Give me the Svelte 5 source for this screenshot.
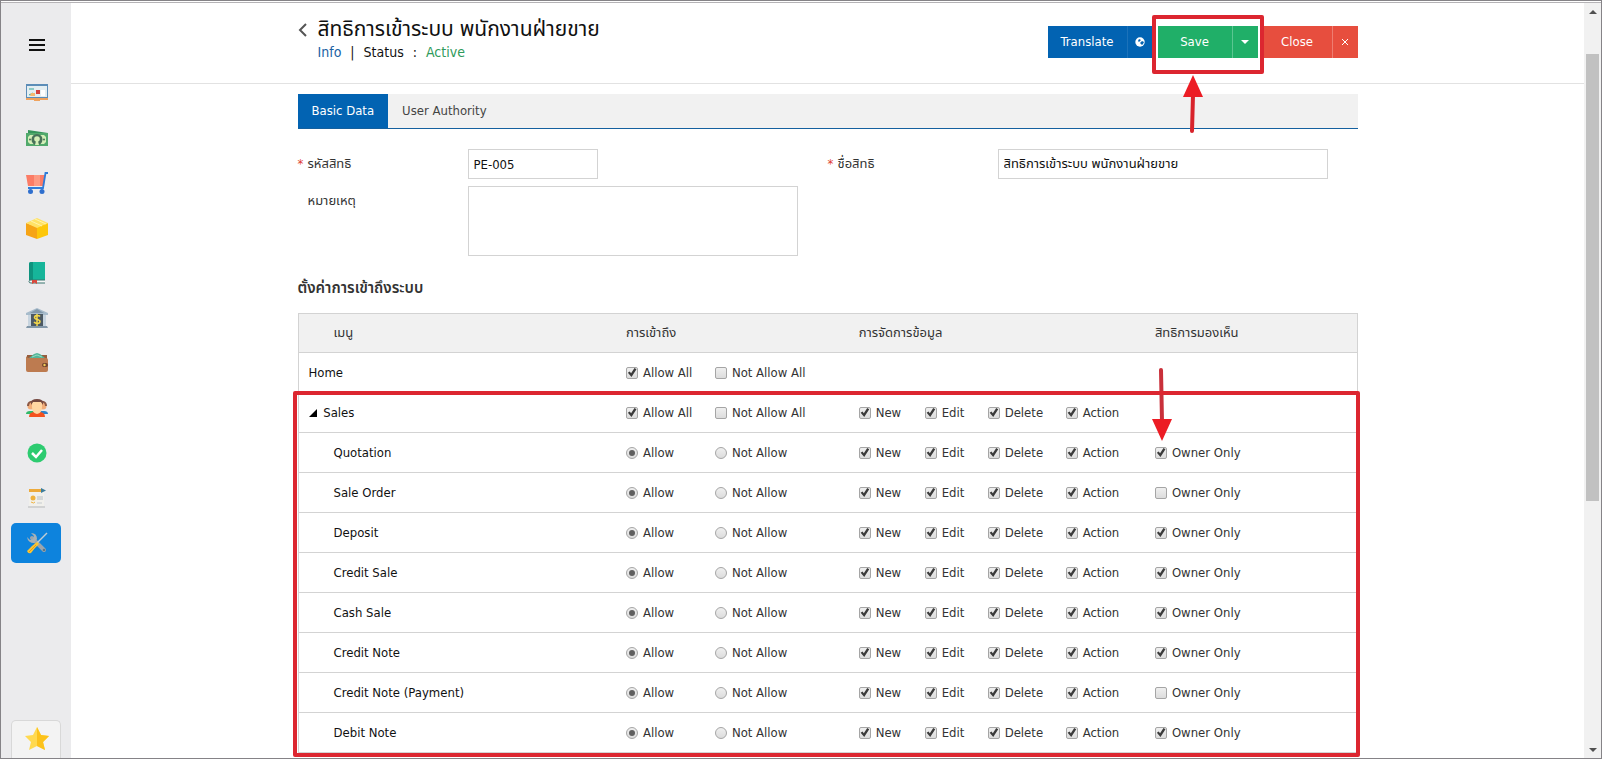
<script>
  let code = $state('PE-005');
  let name = $state('สิทธิการเข้าระบบ พนักงานฝ่ายขาย');
  let note = $state('');
  let tab = $state('Basic Data');

  const tabs = ['Basic Data', 'User Authority'];
  const actions = ['New', 'Edit', 'Delete', 'Action'];
  const menu = [
    'Dashboard', 'Finance', 'Purchase', 'Inventory', 'Accounting',
    'Bank', 'Wallet', 'Contacts', 'Approve', 'Reports', 'Settings'
  ];

  const rows = [
    { label: 'Home', level: 'root' },
    { label: 'Sales', level: 'group' },
    { label: 'Quotation', owner: true },
    { label: 'Sale Order', owner: false },
    { label: 'Deposit', owner: true },
    { label: 'Credit Sale', owner: true },
    { label: 'Cash Sale', owner: true },
    { label: 'Credit Note', owner: true },
    { label: 'Credit Note (Payment)', owner: false },
    { label: 'Debit Note', owner: true }
  ];
</script>

{#snippet icon(kind)}
  <svg width="22" height="22" viewBox="0 0 22 22" aria-hidden="true">
    {#if kind === 'Dashboard'}
      <rect x="0" y="2" width="22" height="15" fill="#5c8db8" />
      <rect x="1" y="4" width="20" height="11" fill="#e4eef2" />
      <path d="M3 7h5M3 13l4-2" stroke="#35a79c" />
      <path d="M5 11h4v3H4z" fill="#f5b96f" />
      <rect x="10" y="8" width="4" height="4" fill="#d3423e" />
      <path d="M15 8h4v6h-4z" fill="#fff" />
      <path d="M0 16h22v2h-8v1H8v-1H0z" fill="#efa35f" />
    {:else if kind === 'Finance'}
      <path d="M2 3l20 3v3H2z" fill="#35955a" />
      <rect x="0" y="6" width="22" height="13" fill="#51a96c" />
      <path d="M4 8h14l2 2v5l-2 2H4l-2-2v-5z" fill="#d4efb8" />
      <circle cx="11" cy="12.500" r="5.500" fill="#48725a" />
      <circle cx="11" cy="12" r="2.800" fill="#d4efb8" />
      <path d="M9 18l1-4h2l1 4z" fill="#d4efb8" />
      <circle cx="4" cy="12.500" r="1" fill="#48725a" />
      <circle cx="18" cy="12.500" r="1" fill="#48725a" />
    {:else if kind === 'Purchase'}
      <path d="M0 3h19l-1 11H2z" fill="#fb7c66" />
      <path d="M8 3h6v11H8z" fill="#fd9a83" />
      <path d="M22 1h-2.500L17 16H2" fill="none" stroke="#2f7bd8" stroke-width="1.800" />
      <circle cx="4.500" cy="19.500" r="2.500" fill="#2f6fce" />
      <circle cx="16" cy="19.500" r="2.500" fill="#2f6fce" />
    {:else if kind === 'Inventory'}
      <path d="M0 6l11 4v12L0 18z" fill="#f6a416" />
      <path d="M22 6l-11 4v12l11-4z" fill="#fdc70a" />
      <path d="M0 6l11-5 11 5-11 5z" fill="#ffe266" />
      <path d="M5 4l11 5M9 2l11 5" stroke="#fff3a8" />
    {:else if kind === 'Accounting'}
      <path d="M5 0h14v18H3V2q0-2 2-2z" fill="#16b59a" />
      <path d="M3 2q0-2 2-2h2v18H3z" fill="#0e937e" />
      <path d="M19 18H5q-2 0-2 1.500T5 21h14" fill="#f6f6f6" stroke="#39756f" />
      <path d="M6 18h5v4l-2.500-1.500L6 22z" fill="#d8483c" />
    {:else if kind === 'Bank'}
      <path d="M11 1l11 5v2H0V6z" fill="#a7bbcb" />
      <path d="M11 2l7 4H4z" fill="#8298aa" />
      <path d="M2 8h3v11H2zM17 8h3v11h-3z" fill="#c7d4df" />
      <rect x="5" y="7" width="12" height="12" fill="#4c5964" />
      <path d="M14 9.500c-1-1.500-5.500-1.500-5.500 1s5.500 1.500 5.500 4-4.500 2.500-6 .5M11 7v12" fill="none" stroke="#f4d84a" stroke-width="1.500" />
      <path d="M1 19h20l1 2H0z" fill="#8297a9" />
    {:else if kind === 'Wallet'}
      <path d="M1 3h20v4H1z" fill="#965d3d" />
      <path d="M3 6l5-4 3-1 3 1 5 4z" fill="#52b69a" />
      <path d="M6 5l5-2 5 2" fill="none" stroke="#94dbc1" />
      <path d="M0 4q1 2 3 2h17q2 0 2 2v10q0 2-2 2H2q-2 0-2-2z" fill="#bd7b50" />
      <rect x="16" y="11" width="6" height="4" rx="2" fill="#70442f" />
      <circle cx="18.500" cy="13" r="1.200" fill="#f4cc57" />
    {:else if kind === 'Contacts'}
      <circle cx="5" cy="9" r="3.500" fill="#f2ad79" />
      <circle cx="17" cy="9" r="3.500" fill="#f2ad79" />
      <path d="M2 9c0-5 5-5 6-3M20 9c0-5-5-5-6-3" fill="none" stroke="#8b5846" stroke-width="2" />
      <path d="M0 17q0-3 4-3h4v3z" fill="#31b969" />
      <path d="M22 17q0-3-4-3h-4v3z" fill="#2e84cb" />
      <path d="M3 20q0-5 6-5h4q6 0 6 5z" fill="#f4511e" />
      <path d="M6 7q0-4 5-4t5 4v3q0 6-5 7-5-1-5-7z" fill="#ffd6a2" />
      <path d="M5 8V6q0-4 6-4t6 4v2l-2-3H7z" fill="#73473f" />
    {:else if kind === 'Approve'}
      <circle cx="11" cy="11" r="9.500" fill="#2dcb70" />
      <path d="M6 11l4 4 6-7" fill="none" stroke="#fff" stroke-width="2.500" />
    {:else if kind === 'Reports'}
      <path d="M3 2h15v18H3z" fill="#f1f0ec" />
      <path d="M2 19h17v2H2z" fill="#d1d2d3" />
      <path d="M3 2h14v3H3z" fill="#edaa3b" />
      <path d="M15 1l5 2.500L15 6z" fill="#3d7d9c" />
      <circle cx="7" cy="11" r="2.500" fill="#efb23e" />
      <path d="M11 10h6M11 12h6" stroke="#b6bec4" />
      <path d="M5 15q3 2 4 0" fill="none" stroke="#efb23e" />
      <path d="M11 16h5" stroke="#c5cbd0" />
    {:else if kind === 'Settings'}
      <path d="M6 6l12 12" stroke="#9ba5ad" stroke-width="4" stroke-linecap="round" />
      <path d="M5 1q6 0 6 6l-3 4Q2 11 1 5l3 3 3-1 1-3z" fill="#a6b1b8" />
      <circle cx="18" cy="18" r="1.300" fill="#5b7788" />
      <path d="M21 1L11 11" stroke="#c0cdd4" stroke-width="1.500" />
      <path d="M11 10l2 2-4 4-4 5q-3 1-4-2l5-5z" fill="#fdc530" />
      <path d="M3 20l7-7" stroke="#e69a20" />
    {/if}
  </svg>
{/snippet}

{#snippet check(label, checked)}
  <label class="option"><input type="checkbox" {checked} />{label}</label>
{/snippet}

<div class="app">
  <div class="screen">
    <nav class="sidebar" aria-label="Main menu">
      <button class="burger" type="button" aria-label="Toggle menu">
        <svg width="16" height="14" viewBox="0 0 16 14" aria-hidden="true">
          <path d="M0 2h16M0 7h16M0 12h16" stroke="#111" stroke-width="2" />
        </svg>
      </button>
      <ul>
        {#each menu as item}
          <li>
            <a class="side-link" class:current={item === 'Settings'} href="#menu" aria-label={item}>
              {@render icon(item)}
            </a>
          </li>
        {/each}
      </ul>
      <button class="favorite" type="button" aria-label="Favorites">
        <svg width="24" height="24" viewBox="0 0 24 24" aria-hidden="true">
          <path d="M12 0l4 8 8 1-6 6 2 8-8-4-8 4 2-8-6-6 8-1z" fill="#ffd94f" />
          <path d="M12 0l4 8 8 1-6 6 2 8-8-4z" fill="#fcc21b" />
        </svg>
      </button>
    </nav>

    <main>
      <header>
        <div class="inner head">
          <a class="back" href="#back" aria-label="Back">
            <svg width="9" height="14" viewBox="0 0 9 14" aria-hidden="true">
              <path d="M8 1L2 7l6 6" fill="none" stroke="#555" stroke-width="2" />
            </svg>
          </a>
          <div class="titles">
            <h1>สิทธิการเข้าระบบ พนักงานฝ่ายขาย</h1>
            <p>
              <a href="#info">Info</a>
              <span>|</span>
              <span>Status</span>
              <span>:</span>
              <span class="active">Active</span>
            </p>
          </div>
          <div class="buttons">
            <div class="split blue">
              <button type="button">Translate</button>
              <button class="side" type="button" aria-label="Language">
                <svg width="10" height="10" viewBox="0 0 10 10" aria-hidden="true">
                  <circle cx="5" cy="5" r="4.700" fill="#fff" />
                  <path d="M4 2l2 1-1 1-1 1-1-1zM7 4l2 1-1 2-1 1-1-1-1-1z" fill="#0263b2" />
                </svg>
              </button>
            </div>
            <div class="split green">
              <button type="button">Save</button>
              <button class="side" type="button" aria-label="More save options">
                <svg width="8" height="4" viewBox="0 0 8 4" aria-hidden="true"><path d="M0 0h8L4 4z" fill="#fff" /></svg>
              </button>
              <div class="mark save-mark"></div>
              <svg class="save-arrow" width="20" height="60" viewBox="0 0 20 60" aria-hidden="true">
                <path d="M10 20L9 56" stroke="#d8232b" stroke-width="4" stroke-linecap="round" />
                <path d="M10 0l10 22H0z" fill="#ec1c24" />
              </svg>
            </div>
            <div class="split red">
              <button type="button">Close</button>
              <button class="side" type="button" aria-label="Dismiss">
                <svg width="8" height="8" viewBox="0 0 8 8" aria-hidden="true"><path d="M1 1l6 6M7 1L1 7" stroke="#fff" /></svg>
              </button>
            </div>
          </div>
        </div>
      </header>

      <div class="inner">
        <div class="tabs" role="tablist">
          {#each tabs as t}
            <button type="button" role="tab" aria-selected={tab === t} class:selected={tab === t} onclick={() => (tab = t)}>{t}</button>
          {/each}
        </div>

        <form>
          <div class="field">
            <label for="code"><span class="star">*</span>รหัสสิทธิ</label>
            <input id="code" class="short" type="text" bind:value={code} />
          </div>
          <div class="field">
            <label for="name"><span class="star">*</span>ชื่อสิทธิ</label>
            <input id="name" type="text" bind:value={name} />
          </div>
          <div class="field">
            <label for="note"><span class="star"></span>หมายเหตุ</label>
            <textarea id="note" bind:value={note}></textarea>
          </div>
        </form>

        <h2>ตั้งค่าการเข้าถึงระบบ</h2>

        <div class="table-wrap">
          <table>
            <colgroup>
              <col class="c-menu" /><col class="c-access" /><col class="c-manage" /><col class="c-view" />
            </colgroup>
            <thead>
              <tr>
                <th class="child">เมนู</th>
                <th>การเข้าถึง</th>
                <th>การจัดการข้อมูล</th>
                <th>สิทธิการมองเห็น</th>
              </tr>
            </thead>
            <tbody>
              {#each rows as row, i}
                <tr>
                  <td class="menu-name" class:child={!row.level}>
                    {#if row.level === 'group'}
                      <svg class="caret" width="8" height="8" viewBox="0 0 8 8" aria-hidden="true"><path d="M8 0v8H0z" /></svg>
                    {/if}
                    {row.label}
                  </td>
                  <td>
                    <div class="access">
                      {#if row.level}
                        {@render check('Allow All', true)}
                        {@render check('Not Allow All', false)}
                      {:else}
                        <label class="option"><input type="radio" name="access-{i}" checked />Allow</label>
                        <label class="option"><input type="radio" name="access-{i}" />Not Allow</label>
                      {/if}
                    </div>
                  </td>
                  <td>
                    {#if row.level !== 'root'}
                      <div class="manage">
                        {#each actions as action}
                          {@render check(action, true)}
                        {/each}
                      </div>
                    {/if}
                  </td>
                  <td class="view">
                    {#if !row.level}
                      {@render check('Owner Only', row.owner)}
                    {/if}
                    {#if row.label === 'Quotation'}
                      <svg class="owner-arrow" width="20" height="74" viewBox="0 0 20 74" aria-hidden="true">
                        <path d="M9 3l1 52" stroke="#c9303a" stroke-width="4" stroke-linecap="round" />
                        <path d="M0 52h20L10 74z" fill="#ec1c24" />
                      </svg>
                    {/if}
                  </td>
                </tr>
              {/each}
            </tbody>
          </table>
          <div class="mark rows-mark"></div>
        </div>
      </div>
    </main>

    <div class="scrollbar" aria-hidden="true">
      <svg width="17" height="17" viewBox="0 0 17 17"><path d="M5 11h8L9 7z" fill="#505050" /></svg>
      <div class="track"><div class="thumb"></div></div>
      <svg width="17" height="17" viewBox="0 0 17 17"><path d="M5 7h8l-4 4z" fill="#505050" /></svg>
    </div>
  </div>
</div>

<style>
  :global(body) { overflow: hidden; }

  .app {
    --sans: "DejaVu Sans Condensed", "Noto Sans", "Noto Sans Thai", sans-serif;
    height: 100vh;
    box-sizing: border-box;
    padding-top: 1px;
    border: 1px solid #858387;
    font-family: var(--sans);
    font-size: 13px;
    line-height: 20px;
    color: #333;
    background: #fff;
  }
  .screen {
    display: flex;
    height: 100%;
    box-sizing: border-box;
    border-top: 1px solid #b5b3b6;
    overflow: hidden;
  }
  button, input, textarea { font: inherit; }
  button { border: 0; padding: 0; cursor: pointer; }
  a { text-decoration: none; }

  /* Sidebar */
  .sidebar {
    flex: 0 0 70px;
    display: flex;
    flex-direction: column;
    background: #ebebed;
  }
  .burger {
    display: flex;
    align-items: center;
    justify-content: center;
    height: 40px;
    margin: 22px 10px 8px;
    padding-left: 2px;
    background: none;
  }
  .sidebar ul {
    display: flex;
    flex-direction: column;
    gap: 5px;
    margin: 0;
    padding: 0 10px;
    list-style: none;
  }
  .side-link {
    display: flex;
    align-items: center;
    justify-content: center;
    height: 40px;
    padding-left: 2px;
    border-radius: 5px;
  }
  .side-link.current { background: #0d83dd; }
  .favorite {
    display: flex;
    justify-content: center;
    flex: 0 0 38px;
    box-sizing: border-box;
    margin: auto 10px 0;
    padding: 6px 0 0 2px;
    border: 1px solid #d8d8d8;
    border-bottom: 0;
    border-radius: 5px 5px 0 0;
    background: #f3f3f3;
  }

  main {
    flex: 1;
    min-width: 0;
    overflow: hidden;
  }
  .inner {
    max-width: 1060px;
    margin: 0 auto;
  }

  /* Page header */
  header {
    height: 80px;
    margin-bottom: 10px;
    border-bottom: 1px solid #e2e2e2;
  }
  .head {
    display: flex;
    align-items: flex-start;
  }
  .back {
    display: flex;
    flex: 0 0 20px;
    padding-top: 20px;
  }
  .titles { flex: 1; padding-top: 12px; }
  h1 {
    margin: 0;
    font-size: 21px;
    font-weight: 400;
    line-height: 28px;
    color: #111;
  }
  .titles p {
    display: flex;
    gap: 9px;
    margin: 0;
    font-size: 14px;
    line-height: 18px;
    color: #111;
  }
  .titles a { color: #1c62a3; }
  .titles .active { color: #2f9a5c; }

  .buttons {
    display: flex;
    gap: 5px;
    padding-top: 23px;
  }
  .split { position: relative; display: flex; height: 32px; }
  .split button {
    width: 79px;
    color: #fff;
    background: var(--fill);
  }
  .split .side {
    display: flex;
    align-items: center;
    justify-content: center;
    width: 26px;
    border-left: 1px solid var(--line);
  }
  .blue { --fill: #0263b2; --line: #1b72ba; }
  .green { --fill: #20af68; --line: #5bc691; }
  .red { --fill: #e74e3e; --line: #ee7d71; }
  .green button { width: 74px; }
  .red button { width: 69px; }

  /* Highlights */
  .mark {
    position: absolute;
    border: 4px solid #dc2630;
    border-radius: 2px;
    pointer-events: none;
  }
  .save-mark { inset: -11px -6px -16px; z-index: 2; }
  .save-arrow {
    position: absolute;
    top: 49px;
    left: 25px;
    z-index: 2;
  }
  .rows-mark { inset: 78px -2px -4px -5px; }
  .owner-arrow {
    position: absolute;
    top: -66px;
    left: 7px;
  }

  .tabs {
    display: flex;
    background: #f1f1f1;
    border-bottom: 1px solid #14609f;
  }
  .tabs button {
    height: 34px;
    padding: 0 14px;
    color: #444;
    background: none;
  }
  .tabs .selected {
    color: #fff;
    background: #0263b2;
  }

  /* Form */
  form {
    display: grid;
    grid-template-columns: 1fr 1fr;
    gap: 7px 0;
    padding-top: 20px;
  }
  .field {
    display: grid;
    grid-template-columns: 170px minmax(0, 330px);
    align-items: start;
  }
  .field label {
    display: flex;
    line-height: 30px;
  }
  .star {
    width: 10px;
    color: #e03c31;
  }
  .field input, textarea {
    box-sizing: border-box;
    width: 100%;
    height: 30px;
    padding: 0 5px;
    border: 1px solid #d3d3d3;
    border-radius: 0;
    color: #111;
    background: #fff;
  }
  .field .short { width: 130px; }
  textarea {
    display: block;
    height: 70px;
    resize: none;
  }

  h2 {
    margin: 22px 0 15px;
    font-size: 15px;
    font-weight: 600;
    line-height: 20px;
  }

  /* Permission table */
  .table-wrap { position: relative; }
  table {
    width: 100%;
    table-layout: fixed;
    border-spacing: 0;
    border: 1px solid #d3d3d3;
    border-bottom: 0;
  }
  .c-menu { width: 30%; }
  .c-access { width: 22%; }
  .c-manage { width: 28%; }
  .c-view { width: 20%; }
  th, td {
    box-sizing: border-box;
    height: 40px;
    padding: 0 10px;
    border-bottom: 1px solid #d3d3d3;
    text-align: left;
    font-weight: 400;
    white-space: nowrap;
  }
  th { height: 39px; background: #f1f1f1; }
  .child { padding-left: 35px; }
  .menu-name { color: #111; }
  .caret { margin-right: 3px; }
  .view { position: relative; }
  .access {
    display: grid;
    grid-template-columns: 89px 1fr;
  }
  .manage {
    display: grid;
    grid-template-columns: 66px 63px 78px 1fr;
  }
  .option {
    display: flex;
    align-items: center;
    gap: 5px;
  }
  .option input {
    display: grid;
    place-items: center;
    appearance: none;
    box-sizing: border-box;
    flex: 0 0 12px;
    height: 12px;
    margin: 0;
    border: 1px solid #a5a5a5;
    border-radius: 2px;
    background: linear-gradient(#efefef, #dcdcdc);
  }
  .option input[type='radio'] { border-radius: 50%; }
  .option input:checked::before {
    content: '';
    width: 10px;
    height: 10px;
    background: #3b3b3b;
    clip-path: polygon(10% 52%, 28% 40%, 42% 58%, 76% 6%, 96% 18%, 46% 94%);
  }
  .option input[type='radio']:checked::before {
    width: 6px;
    height: 6px;
    border-radius: 50%;
    background: #606060;
    clip-path: none;
  }

  /* Scrollbar */
  .scrollbar {
    flex: 0 0 17px;
    display: flex;
    flex-direction: column;
    background: #f1f1f1;
  }
  .track {
    flex: 1;
    padding: 34px 2px 0;
  }
  .thumb {
    height: 65%;
    background: #c1c1c1;
  }
</style>
